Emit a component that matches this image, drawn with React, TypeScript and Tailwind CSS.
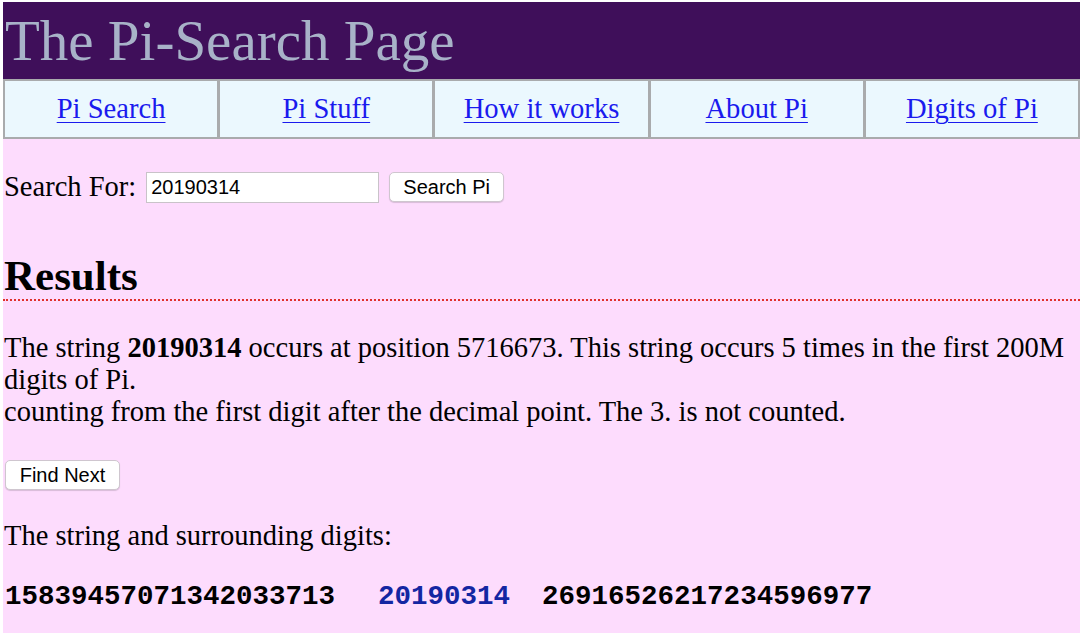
const navLinks = ['Pi Search', 'Pi Stuff', 'How it works', 'About Pi', 'Digits of Pi']

export default function App() {
  return (
    <div className="min-h-[633px] bg-white pl-[3px] pt-[2px]">
      <div className="flex min-h-[631px] flex-col bg-[#fddcfd] font-['Liberation_Serif',serif] text-black">
        <header className="flex h-[77px] items-center bg-[#3f0f5a] px-[2px]">
          <h1 className="text-[57px] leading-none text-[#a8b2c8]">The Pi-Search Page</h1>
        </header>

        <nav className="grid h-[60px] grid-cols-5 gap-[3px] bg-[#a9abad] p-[2px]">
          {navLinks.map((label) => (
            <div key={label} className="flex items-center justify-center bg-[#ebf8fe]">
              <a href="#" className="text-[28.6px] leading-none text-[#1a1aee] underline decoration-1 underline-offset-[4px]">
                {label}
              </a>
            </div>
          ))}
        </nav>

        <form className="mt-[32px] flex h-[32px] items-center pl-[1px]">
          <label className="text-[28.5px] leading-none">Search For:</label>
          <input
            defaultValue="20190314"
            className="ml-[10px] h-[31px] w-[233px] border border-[#c9c3c9] bg-white px-[4px] font-['Liberation_Sans',sans-serif] text-[20px] outline-none"
          />
          <button
            type="button"
            className="ml-[10px] h-[30px] w-[115px] rounded-[5px] border border-[#cfc6cf] bg-white font-['Liberation_Sans',sans-serif] text-[20px] leading-none shadow-[0_1px_1px_rgba(0,0,0,0.15)]"
          >
            Search Pi
          </button>
        </form>

        <h2 className="mt-[51px] pl-[1px] text-[43px] font-bold leading-[44px]">Results</h2>
        <div className="mt-[1px] border-b-2 border-dotted border-[#e0302c]" />

        <p className="mt-[31px] pl-[1px] pr-[6px] text-[28.5px] leading-[32px]">
          The string <b>20190314</b> occurs at position 5716673. This string occurs 5 times in the first 200M digits of Pi.
          <br />
          counting from the first digit after the decimal point. The 3. is not counted.
        </p>

        <div className="mt-[32px] pl-[2px]">
          <button
            type="button"
            className="h-[30px] w-[115px] rounded-[5px] border border-[#cfc6cf] bg-white font-['Liberation_Sans',sans-serif] text-[20px] leading-none shadow-[0_1px_1px_rgba(0,0,0,0.15)]"
          >
            Find Next
          </button>
        </div>

        <p className="mt-[30px] pl-[1px] text-[28.5px] leading-[32px]">The string and surrounding digits:</p>

        {/* digits before, the match, digits after */}
        <div className="mt-[29px] flex pl-[2px] font-['Liberation_Mono',monospace] text-[27.5px] leading-[32px] font-bold">
          <span>15839457071342033713</span>
          <span className="ml-[43px] text-[#1326a2]">20190314</span>
          <span className="ml-[32px]">26916526217234596977</span>
        </div>
      </div>
    </div>
  )
}
